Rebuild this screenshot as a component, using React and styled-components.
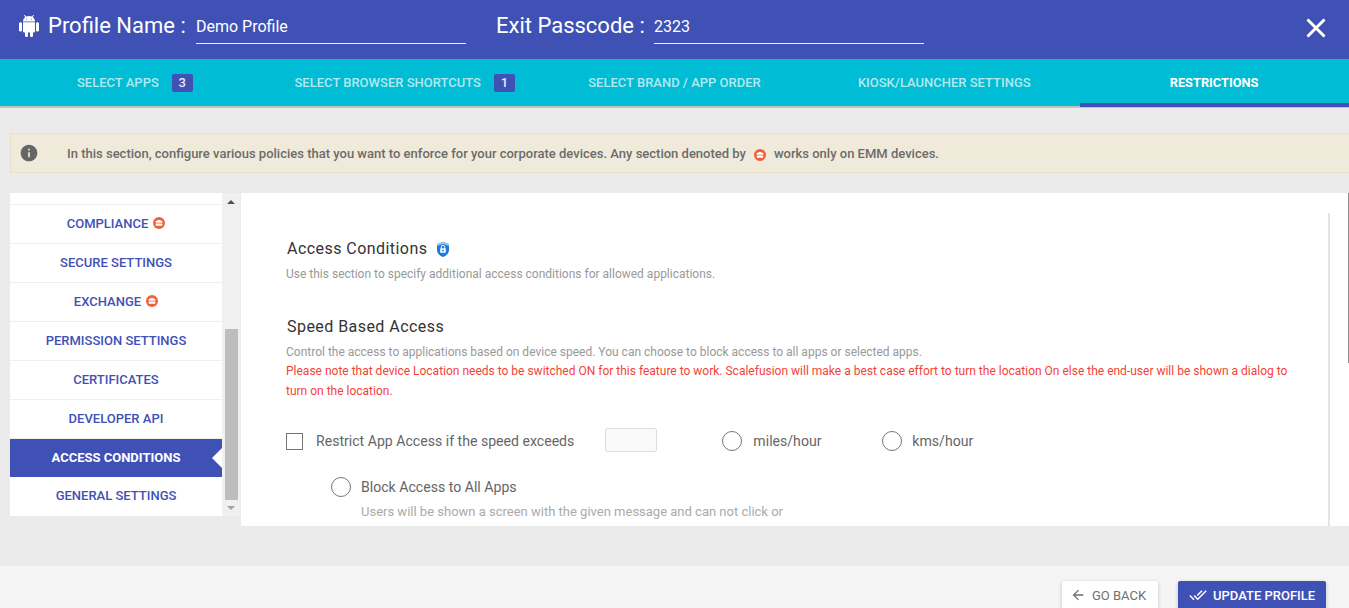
import React from "react";
import styled, { createGlobalStyle } from "styled-components";
import { MdInfo, MdDoneAll, MdArrowBack } from "react-icons/md";

const GlobalStyle = createGlobalStyle`
  html, body {
    margin: 0;
    height: 608px;
    overflow: hidden;
    background: #ebebeb;
    font-family: Roboto, "Liberation Sans", sans-serif;
  }
  * { box-sizing: border-box; }
`;

const Page = styled.div`
  position: relative;
  height: 608px;
  overflow: hidden;
  display: flex;
  flex-direction: column;
`;

const Header = styled.header`
  height: 59px;
  flex: none;
  background: #3f51b5;
  color: #fff;
  display: flex;
  align-items: center;
  padding: 0 23px 8px 17px;
`;

const HeaderLabel = styled.span`
  font-size: 22px;
  line-height: 26px;
  white-space: nowrap;
  margin-left: ${(p) => p.$offset}px;
  width: ${(p) => p.$width}px;
`;

const HeaderInput = styled.div`
  width: 270px;
  height: 32px;
  margin-top: 5px;
  border-bottom: 1px solid #e8eaf6;
  font-size: 16px;
  line-height: 22px;
  padding-top: 4px;
`;

const CloseButton = styled.div`
  margin-left: auto;
  display: flex;
  margin-top: 5px;
`;

const Tabs = styled.nav`
  height: 49px;
  flex: none;
  display: grid;
  grid-template-columns: repeat(5, 1fr);
  background: #00bcd4;
  border-bottom: 2px solid #c4c4c4;
`;

const Tab = styled.div`
  position: relative;
  display: flex;
  align-items: center;
  justify-content: center;
  gap: 13px;
  font-size: ${(p) => (p.$active ? 12.8 : 13)}px;
  font-weight: ${(p) => (p.$active ? 700 : 500)};
  color: ${(p) => (p.$active ? "#fff" : "rgba(255,255,255,0.7)")};
  ${(p) =>
    p.$active &&
    `&::after {
      content: "";
      position: absolute;
      left: 1px;
      right: 0;
      bottom: -1px;
      height: 4px;
      background: #3f51b5;
    }`}
`;

const Badge = styled.span`
  width: 21px;
  height: 18px;
  border-radius: 2px;
  background: #3f51b5;
  color: #e8eaf6;
  display: flex;
  align-items: center;
  justify-content: center;
  font-size: 13px;
  font-weight: 500;
`;

const Alert = styled.div`
  height: 40px;
  flex: none;
  margin: 25px 0 20px 10px;
  background: #f0eadb;
  border: 1px solid #e8e2c8;
  border-right: none;
  border-radius: 2px 0 0 2px;
  display: flex;
  align-items: center;
  padding-left: 8px;
  font-size: 13px;
  font-weight: 500;
  color: #6c6c6c;
`;

const AlertIcon = styled.div`
  display: flex;
  width: 48px;
  flex: none;
  color: #666;
`;

const AlertGap = styled.span`
  display: inline-flex;
  margin: 0 8px;
  vertical-align: -3px;
`;

const Main = styled.main`
  height: 333px;
  flex: none;
  display: flex;
  padding-left: 10px;
`;

const SideColumn = styled.div`
  width: 230px;
  height: 323px;
  flex: none;
  display: flex;
`;

const SideList = styled.div`
  width: 212px;
  background: #fff;
  display: flex;
  flex-direction: column;
`;

const SideTop = styled.div`
  height: 12px;
  border-bottom: 1px solid #efefef;
`;

const SideRow = styled.div`
  position: relative;
  height: ${(p) => (p.$active || p.$last ? 38 : 39)}px;
  padding-bottom: 2px;
  display: flex;
  align-items: center;
  justify-content: center;
  gap: 5px;
  font-size: 13px;
  font-weight: ${(p) => (p.$active ? 700 : 500)};
  color: ${(p) => (p.$active ? "#fff" : "#3f51b5")};
  background: ${(p) => (p.$active ? "#3f51b5" : "#fff")};
  border-bottom: ${(p) => (p.$active || p.$last ? "none" : "1px solid #efefef")};
  ${(p) =>
    p.$active &&
    `&::after {
      content: "";
      position: absolute;
      right: 0;
      top: 9px;
      border-style: solid;
      border-width: 10px 10px 10px 0;
      border-color: transparent #fff transparent transparent;
    }`}
`;

const ScrollTrack = styled.div`
  width: 18px;
  background: #f0f0f0;
  display: flex;
  flex-direction: column;
  align-items: center;
`;

const ScrollSpacer = styled.div`
  height: 125px;
`;

const ScrollThumb = styled.div`
  width: 13px;
  height: 171px;
  background: #bdbdbd;
`;

const Arrow = styled.span`
  margin-top: ${(p) => (p.$down ? 6 : 7)}px;
  width: 0;
  height: 0;
  border-left: 4px solid transparent;
  border-right: 4px solid transparent;
  ${(p) =>
    p.$down
      ? "border-top: 4px solid #a3a3a3;"
      : "border-bottom: 4px solid #505050;"}
`;

const Panel = styled.section`
  margin-left: 1px;
  flex: 1;
  background: #fff;
  overflow: hidden;
  padding: 20px 19px 0 45px;
`;

const PanelInner = styled.div`
  height: 400px;
  padding-top: 25px;
  border-right: 2px solid #e4e4e4;
  padding-right: 30px;
`;

const Heading = styled.h3`
  margin: 0;
  padding-left: 1px;
  font-size: 16px;
  line-height: 22px;
  font-weight: 400;
  letter-spacing: 0.45px;
  color: #333;
  display: flex;
  align-items: center;
  gap: 10px;
`;

const Note = styled.p`
  margin: ${(p) => p.$top || 0}px 0 0;
  font-size: 12px;
  line-height: ${(p) => p.$line || 20}px;
  color: ${(p) => (p.$red ? "#f44336" : "#999")};
`;

const SpeedHeading = styled(Heading)`
  margin-top: 32px;
`;

const OptionRow = styled.div`
  display: flex;
  align-items: center;
  height: 26px;
  margin-top: 27px;
  font-size: 14.1px;
  color: #666;
`;

const Checkbox = styled.span`
  width: 17px;
  height: 17px;
  flex: none;
  border: 1px solid #757575;
  margin-right: 13px;
`;

const SpeedInput = styled.span`
  width: 52px;
  height: 24px;
  margin: 0 65px 2px 31px;
  background: #fafafa;
  border: 1px solid #ddd;
  border-radius: 2px;
`;

const Radio = styled.span`
  width: 20px;
  height: 20px;
  flex: none;
  border: 1px solid #757575;
  border-radius: 50%;
  margin-right: ${(p) => p.$gap || 11}px;
`;

const RadioText = styled.span`
  width: ${(p) => p.$width}px;
`;

const SubOption = styled.div`
  margin: 23px 0 0 45px;
`;

const SubRow = styled.div`
  display: flex;
  align-items: center;
  height: 20px;
  font-size: 14.1px;
  color: #666;
`;

const SubNote = styled.p`
  margin: 6px 0 0 30px;
  font-size: 13px;
  line-height: 18px;
  color: #aaa;
`;

const PageScroll = styled.div`
  position: absolute;
  right: 0;
  top: 193px;
  width: 1px;
  height: 170px;
  background: #8f8f8f;
`;

const Footer = styled.footer`
  margin-top: 40px;
  flex: 1;
  background: #f5f5f5;
  display: flex;
  justify-content: flex-end;
  gap: 20px;
  padding: 15px 23px 0 0;
`;

const FooterButton = styled.button`
  width: ${(p) => p.$width}px;
  height: 28px;
  border: none;
  border-radius: 2px;
  display: flex;
  align-items: center;
  gap: 6px;
  padding: 0 0 0 ${(p) => (p.$primary ? 11 : 8)}px;
  font-family: inherit;
  font-size: 13px;
  font-weight: ${(p) => (p.$primary ? 500 : 400)};
  color: ${(p) => (p.$primary ? "#fff" : "#6f6f6f")};
  background: ${(p) => (p.$primary ? "#3f51b5" : "#fff")};
  box-shadow: 0 1px 4px rgba(0, 0, 0, 0.2);
`;

function AndroidIcon() {
  return (
    <svg width="24" height="22" viewBox="0 0 24 24" preserveAspectRatio="none" fill="#fff">
      <path d="M6 18c0 .55.45 1 1 1h1v3.500c0 .83.67 1.500 1.500 1.500s1.500-.67 1.500-1.500V19h2v3.500c0 .83.67 1.500 1.500 1.500s1.500-.67 1.500-1.500V19h1c.55 0 1-.45 1-1V8H6v10zM3.500 8C2.670 8 2 8.670 2 9.500v7c0 .83.67 1.500 1.500 1.500S5 17.330 5 16.500v-7C5 8.670 4.330 8 3.500 8zm17 0c-.83 0-1.500.67-1.500 1.500v7c0 .83.67 1.500 1.500 1.500s1.500-.67 1.500-1.500v-7c0-.83-.67-1.500-1.500-1.500zm-4.970-5.840l1.300-1.300c.2-.2.2-.51 0-.71-.2-.2-.51-.2-.71 0l-1.480 1.480C13.850 1.230 12.950 1 12 1c-.96 0-1.860.23-2.660.63L7.850.15c-.2-.2-.51-.2-.71 0-.2.2-.2.51 0 .71l1.310 1.310C6.970 3.260 6 5.010 6 7h12c0-1.990-.97-3.750-2.470-4.840zM10 5H9V4h1v1zm5 0h-1V4h1v1z" />
    </svg>
  );
}

function CloseIcon() {
  return (
    <svg width="20" height="20" viewBox="0 0 20 20">
      <path d="M1.500 1.500l17 17M18.500 1.500l-17 17" stroke="#fff" strokeWidth="3" fill="none" />
    </svg>
  );
}

function EmmIcon({ size = 12 }) {
  return (
    <svg width={size} height={size} viewBox="0 0 12 12">
      <circle cx="6" cy="6" r="6" fill="#f2603a" />
      <path d="M4.600 3.800V3h2.800v.8h1.400c.3 0 .5.2.5.5v1.500H2.700V4.300c0-.3.2-.5.5-.5h1.400z" fill="#fff" />
      <path d="M2.700 6.400h6.600v1.800c0 .3-.2.5-.5.5H3.200c-.3 0-.5-.2-.5-.5V6.400z" fill="#fff" />
    </svg>
  );
}

function ShieldIcon() {
  return (
    <svg width="12" height="15" viewBox="0 0 12 15">
      <path d="M6 0l6 2v6c0 3.400-2.600 5.800-6 7-3.400-1.200-6-3.600-6-7V2z" fill="#1e78dc" />
      <path d="M6 0l6 2v2L6 2 0 4V2z" fill="#9fc4ef" />
      <rect x="3.200" y="6.200" width="5.600" height="4.600" rx="0.600" fill="#fff" />
      <path d="M4.300 6.300V5a1.700 1.700 0 0 1 3.400 0v1.300" fill="none" stroke="#fff" strokeWidth="0.900" />
      <circle cx="6" cy="8.500" r="0.900" fill="#1e78dc" />
    </svg>
  );
}

const sideItems = [
  { name: "COMPLIANCE", emm: true },
  { name: "SECURE SETTINGS" },
  { name: "EXCHANGE", emm: true },
  { name: "PERMISSION SETTINGS" },
  { name: "CERTIFICATES" },
  { name: "DEVELOPER API" },
  { name: "ACCESS CONDITIONS", active: true },
  { name: "GENERAL SETTINGS", last: true },
];

function App() {
  return (
    <Page>
      <GlobalStyle />
      <Header>
        <AndroidIcon />
        <HeaderLabel $offset={7} $width={148}>Profile Name :</HeaderLabel>
        <HeaderInput>Demo Profile</HeaderInput>
        <HeaderLabel $offset={30} $width={158}>Exit Passcode :</HeaderLabel>
        <HeaderInput>2323</HeaderInput>
        <CloseButton>
          <CloseIcon />
        </CloseButton>
      </Header>
      <Tabs>
        <Tab>SELECT APPS <Badge>3</Badge></Tab>
        <Tab>SELECT BROWSER SHORTCUTS <Badge>1</Badge></Tab>
        <Tab>SELECT BRAND / APP ORDER</Tab>
        <Tab>KIOSK/LAUNCHER SETTINGS</Tab>
        <Tab $active>RESTRICTIONS</Tab>
      </Tabs>
      <Alert>
        <AlertIcon>
          <MdInfo size={20} />
        </AlertIcon>
        <span>
          In this section, configure various policies that you want to enforce for your corporate devices. Any section denoted by
          <AlertGap><EmmIcon /></AlertGap>
          works only on EMM devices.
        </span>
      </Alert>
      <Main>
        <SideColumn>
          <SideList>
            <SideTop />
            {sideItems.map((item) => (
              <SideRow key={item.name} $active={item.active} $last={item.last}>
                {item.name}
                {item.emm && <EmmIcon />}
              </SideRow>
            ))}
          </SideList>
          <ScrollTrack>
            <Arrow />
            <ScrollSpacer />
            <ScrollThumb />
            <Arrow $down />
          </ScrollTrack>
        </SideColumn>
        <Panel>
          <PanelInner>
            <Heading>Access Conditions <ShieldIcon /></Heading>
            <Note $top={4}>Use this section to specify additional access conditions for allowed applications.</Note>
            <SpeedHeading>Speed Based Access</SpeedHeading>
            <Note $top={6} $line={16}>Control the access to applications based on device speed. You can choose to block access to all apps or selected apps.</Note>
            <Note $red $top={1}>Please note that device Location needs to be switched ON for this feature to work. Scalefusion will make a best case effort to turn the location On else the end-user will be shown a dialog to turn on the location.</Note>
            <OptionRow>
              <Checkbox />
              <span>Restrict App Access if the speed exceeds</span>
              <SpeedInput />
              <Radio />
              <RadioText $width={129}>miles/hour</RadioText>
              <Radio $gap={10} />
              <RadioText>kms/hour</RadioText>
            </OptionRow>
            <SubOption>
              <SubRow>
                <Radio $gap={10} />
                <span>Block Access to All Apps</span>
              </SubRow>
              <SubNote>Users will be shown a screen with the given message and can not click or</SubNote>
            </SubOption>
          </PanelInner>
        </Panel>
      </Main>
      <PageScroll />
      <Footer>
        <FooterButton $width={96}>
          <MdArrowBack size={16} />
          GO BACK
        </FooterButton>
        <FooterButton $width={148} $primary>
          <MdDoneAll size={18} />
          UPDATE PROFILE
        </FooterButton>
      </Footer>
    </Page>
  );
}

export default App;
